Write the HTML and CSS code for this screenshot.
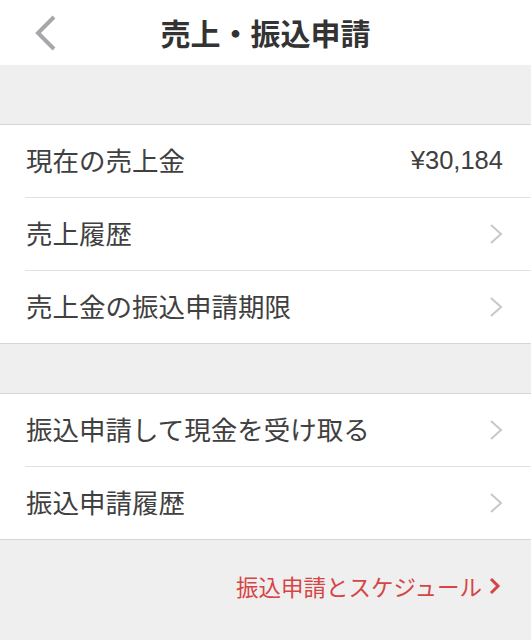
FILE: index.html
```html
<!DOCTYPE html>
<html lang="ja">
<head>
<meta charset="utf-8">
<title>売上・振込申請</title>
<link rel="stylesheet" href="styles.css">
</head>
<body>
<header class="navbar">
  <div class="nav-left">
    <svg class="back-icon" width="24" height="38" viewBox="0 0 24 38" aria-hidden="true">
      <polyline points="20,3 4,19 20,35" fill="none" stroke="#a7a7ab" stroke-width="4" stroke-linejoin="miter"/>
    </svg>
  </div>
  <h1 class="nav-title">売上・振込申請</h1>
  <div class="nav-right"></div>
</header>

<main>
  <div class="gap gap-first"></div>
  <section class="group">
    <div class="row">
      <span class="label">現在の売上金</span>
      <span class="value">¥30,184</span>
    </div>
    <div class="row">
      <span class="label">売上履歴</span>
      <svg class="chev" width="14" height="22" viewBox="0 0 14 22" aria-hidden="true"><polyline points="2,2 12,11 2,20" fill="none" stroke="#c7c7cc" stroke-width="2"/></svg>
    </div>
    <div class="row">
      <span class="label">売上金の振込申請期限</span>
      <svg class="chev" width="14" height="22" viewBox="0 0 14 22" aria-hidden="true"><polyline points="2,2 12,11 2,20" fill="none" stroke="#c7c7cc" stroke-width="2"/></svg>
    </div>
  </section>
  <div class="gap gap-second"></div>
  <section class="group">
    <div class="row">
      <span class="label">振込申請して現金を受け取る</span>
      <svg class="chev" width="14" height="22" viewBox="0 0 14 22" aria-hidden="true"><polyline points="2,2 12,11 2,20" fill="none" stroke="#c7c7cc" stroke-width="2"/></svg>
    </div>
    <div class="row">
      <span class="label">振込申請履歴</span>
      <svg class="chev" width="14" height="22" viewBox="0 0 14 22" aria-hidden="true"><polyline points="2,2 12,11 2,20" fill="none" stroke="#c7c7cc" stroke-width="2"/></svg>
    </div>
  </section>
  <div class="footer-link">
    <a class="schedule-link" href="#">振込申請とスケジュール<svg class="link-chev" width="12" height="18" viewBox="0 0 12 18" aria-hidden="true"><polyline points="2,2 9,9 2,16" fill="none" stroke="#d64545" stroke-width="3"/></svg></a>
  </div>
</main>
</body>
</html>
```

FILE: styles.css
```css
* {
  box-sizing: border-box;
}

html, body {
  margin: 0;
  padding: 0;
}

body {
  width: 531px;
  min-height: 640px;
  background: #efeff0;
  font-family: "Liberation Sans", "Noto Sans CJK JP", sans-serif;
  color: #404040;
}

.navbar {
  display: grid;
  grid-template-columns: 1fr auto 1fr;
  align-items: center;
  height: 65px;
  background: #ffffff;
}

.nav-left {
  display: flex;
  align-items: center;
  padding-left: 34px;
}

.back-icon {
  display: block;
}

.nav-title {
  margin: 0;
  font-size: 30px;
  font-weight: 700;
  color: #333333;
  line-height: 63px;
  font-family: "Noto Sans CJK JP", sans-serif;
}

.gap-first {
  height: 59px;
}

.gap-second {
  height: 49px;
}

.group {
  background: #ffffff;
  border-top: 1px solid #d6d6d8;
  border-bottom: 1px solid #d6d6d8;
  padding-left: 25px;
}

.row {
  display: flex;
  align-items: center;
  justify-content: space-between;
  height: 72px;
  padding-right: 28px;
}

.row + .row {
  height: 73px;
  border-top: 1px solid #e2e2e4;
}

.label {
  font-family: "Noto Sans CJK JP", sans-serif;
  font-size: 26.5px;
  line-height: 36px;
  color: #404040;
  padding-left: 1px;
  margin-top: -3px;
}

.value {
  font-family: "Liberation Sans", sans-serif;
  font-size: 25.5px;
  color: #404040;
  margin-top: -2px;
}

.chev {
  display: block;
}

.footer-link {
  display: flex;
  justify-content: flex-end;
  padding: 31px 30px 0 0;
}

.schedule-link {
  display: flex;
  align-items: center;
  gap: 7px;
  font-family: "Noto Sans CJK JP", sans-serif;
  font-size: 22.5px;
  line-height: 30px;
  color: #d64545;
  text-decoration: none;
}

.link-chev {
  display: block;
}
```
